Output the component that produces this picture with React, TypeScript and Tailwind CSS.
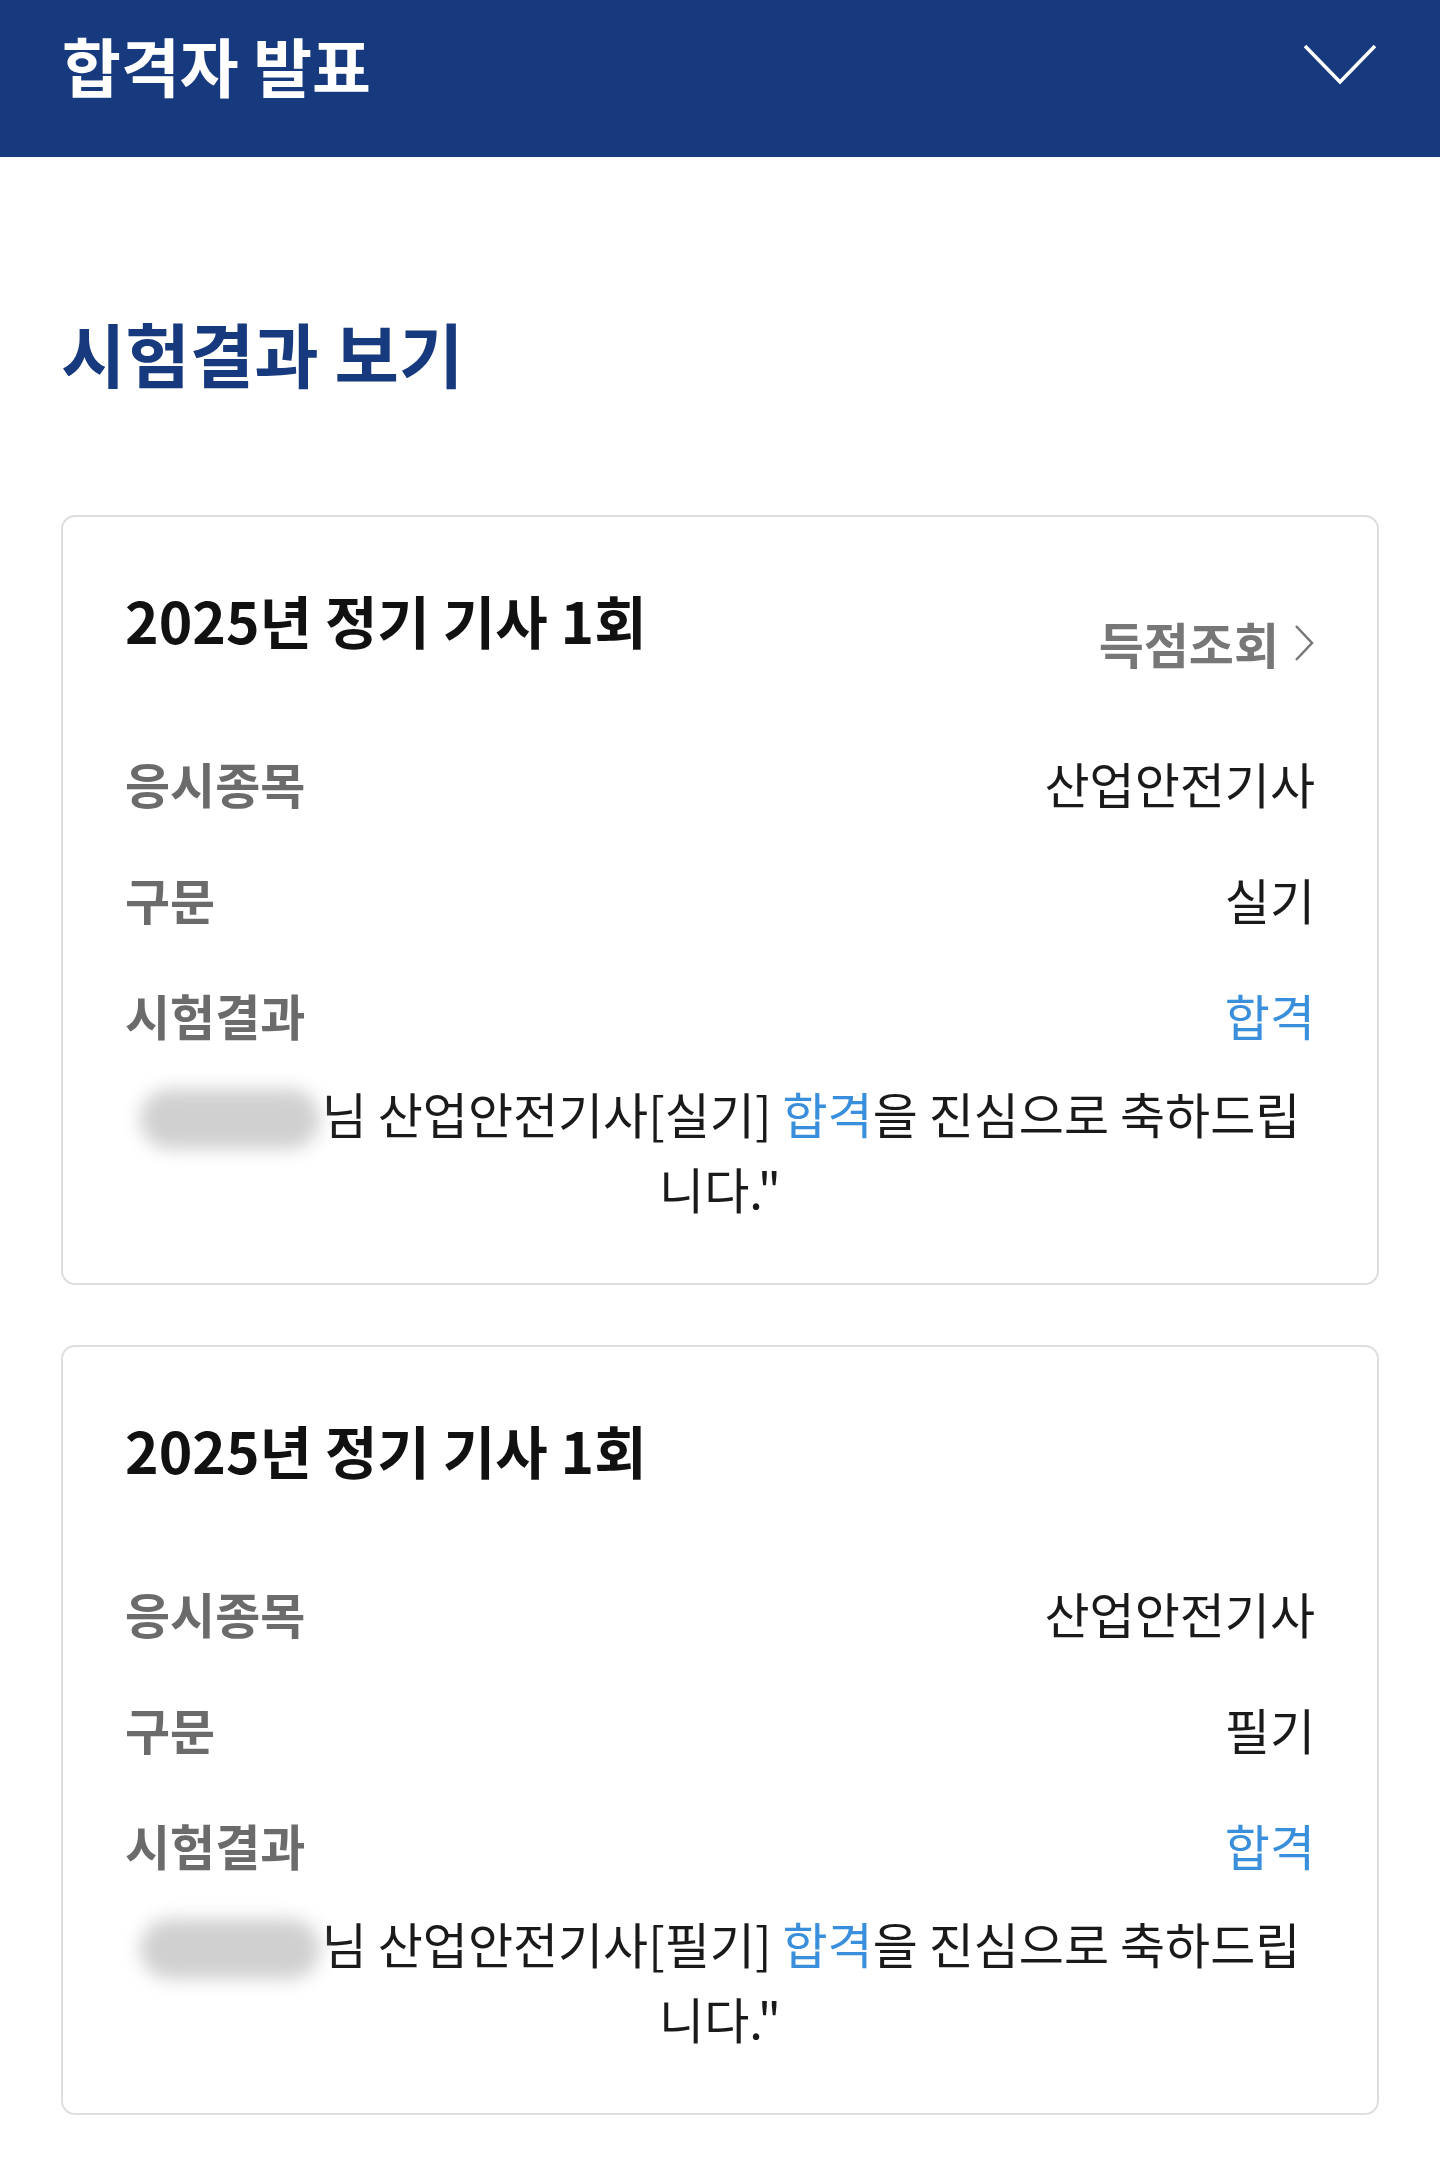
import React from 'react';

type Result = {
  title: string;
  subject: string;
  kind: string;
  showScore: boolean;
};

const results: Result[] = [
  { title: '2025년 정기 기사 1회', subject: '산업안전기사', kind: '실기', showScore: true },
  { title: '2025년 정기 기사 1회', subject: '산업안전기사', kind: '필기', showScore: false },
];

const font = { fontFamily: '"Noto Sans CJK KR", "Noto Sans", sans-serif' };

const Row: React.FC<{ label: string; children: React.ReactNode }> = ({ label, children }) => (
  <div className="h-[116px] flex items-center justify-between">
    <span className="text-[49px] font-bold text-[#6b6b6b] leading-none">{label}</span>
    <span className="text-[49px] leading-none">{children}</span>
  </div>
);

const ResultCard: React.FC<{ r: Result }> = ({ r }) => (
  <div className="border-2 border-[#dedede] rounded-[14px] px-[62px] pt-[68px] pb-[58px]">
    {/* title */}
    <div className="h-[68px] flex items-start justify-between">
      <h3 className="text-[57px] font-bold text-[#111] leading-[68px]">{r.title}</h3>
      {r.showScore && (
        <div className="pt-[29px] flex items-center gap-[14px] text-[49px] font-bold text-[#777]">
          <span className="leading-[57px]">득점조회</span>
          <svg width="22" height="40" viewBox="0 0 22 40" fill="none">
            <polyline points="3,3 19,20 3,37" stroke="#777" strokeWidth="2.5" />
          </svg>
        </div>
      )}
    </div>

    <div className="mt-[71px]">
      <Row label="응시종목">
        <span className="text-[#1a1a1a]">{r.subject}</span>
      </Row>
      <Row label="구문">
        <span className="text-[#1a1a1a]">{r.kind}</span>
      </Row>
      <Row label="시험결과">
        <span className="text-[#3a8fdc]">합격</span>
      </Row>
    </div>

    {/* message */}
    <p className="mt-[3px] text-center text-[49px] leading-[75px] text-[#1a1a1a] whitespace-nowrap -mx-[60px]">
      <span className="inline-block align-middle w-[180px] h-[60px] -mt-[4px] mr-[2px] rounded-[30px] bg-[#d0d0d0] blur-[9px]" />
      님 {r.subject}[{r.kind}] <span className="text-[#3a8fdc]">합격</span>을 진심으로 축하드립
      <br />
      니다."
    </p>
  </div>
);

export default function App() {
  return (
    <div className="min-h-screen bg-white" style={font}>
      <header className="h-[157px] bg-[#17397d] flex items-start justify-between pl-[62px] pr-[62px]">
        <h1 className="mt-[26px] text-[64px] font-bold text-white leading-[76px]">합격자 발표</h1>
        <svg className="mt-[42px]" width="76" height="44" viewBox="0 0 76 44" fill="none">
          <polyline points="3,4 38,40 73,4" stroke="#fff" strokeWidth="3.5" />
        </svg>
      </header>

      <main className="px-[61px] pt-[156px] pb-[48px]">
        <h2 className="text-[70px] font-bold text-[#17397d] leading-[80px]">시험결과 보기</h2>
        <div className="mt-[122px] flex flex-col gap-[60px]">
          {results.map((r, i) => (
            <ResultCard key={i} r={r} />
          ))}
        </div>
      </main>
    </div>
  );
}
